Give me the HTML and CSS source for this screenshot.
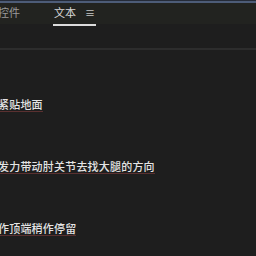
FILE: index.html
```html
<!DOCTYPE html>
<html>
<head>
<meta charset="utf-8">
<link rel="stylesheet" href="styles.css">
</head>
<body>
<div class="topline"></div>
<div class="tabbar">
  <div class="tab tab-controls">控件</div>
  <div class="tab tab-text active">文本<span class="menu">≡</span></div>
</div>
<div class="toolbar"></div>
<div class="divider"></div>
<div class="list">
  <div class="item"><span class="txt">紧贴地面</span></div>
  <div class="item"><span class="txt">发力带动肘关节去找大腿的方向</span></div>
  <div class="item"><span class="txt">作顶端稍作停留</span></div>
</div>
</body>
</html>
```
FILE: styles.css
```css
html, body {
  margin: 0;
  padding: 0;
  background: #1e1e1e;
  width: 256px;
  height: 256px;
  overflow: hidden;
  font-family: "Noto Sans CJK SC", "Noto Sans", sans-serif;
}
.topline {
  height: 3px;
  background: linear-gradient(#252b38 0, #252b38 1px, #4d5c78 1px, #4d5c78 3px);
}
.tabbar {
  height: 21px;
  background: #222320;
  display: flex;
  align-items: flex-start;
}
.tab {
  font-size: 11px;
  line-height: 11px;
  padding-top: 4px;
  color: #9a9a9a;
}
.tab-controls {
  margin-left: -2px;
  width: 55px;
}
.tab-text {
  color: #d8d8d8;
  display: flex;
  height: 17px;
  padding-left: 1px;
  padding-right: 1px;
  border-bottom: 2px solid #dcdcdc;
}
.menu {
  margin-left: 9px;
  font-size: 10px;
  color: #c8c8c8;
}
.toolbar {
  height: 24px;
  background: #1e1e1e;
}
.divider {
  height: 2px;
  background: #2d2d2d;
}
.list {
  display: flex;
  flex-direction: column;
}
.item {
  height: 62px;
  display: flex;
  align-items: flex-end;
}
.txt {
  font-size: 11px;
  font-weight: 500;
  letter-spacing: 0.2px;
  line-height: 12px;
  color: #e4e4e4;
  margin-left: -2px;
  border-bottom: 1px solid #5a3030;
  padding-bottom: 1px;
}
```
